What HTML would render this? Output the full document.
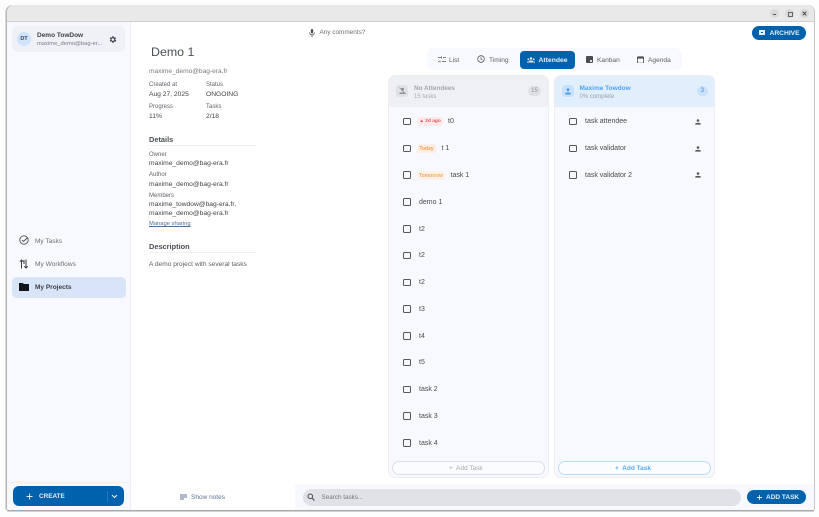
<!DOCTYPE html>
<html><head><meta charset="utf-8"><style>
html,body{margin:0;padding:0;width:819px;height:517px;overflow:hidden;background:#fdfdfd;font-family:"Liberation Sans",sans-serif;color:#3c4043}
body{filter:blur(.3px)}
div,span,svg{position:absolute;white-space:nowrap}
.t,.tk,.tab{transform:translateY(1px)}
.t{line-height:10px;height:10px}
.s{font-size:6px;color:#60646a}
.m{font-size:6.700px;color:#3f4347}
.h{font-size:7.400px;font-weight:bold;color:#4a4e53}
.cb{width:7.500px;height:7.500px;box-sizing:border-box;border:1.100px solid #54585d;border-radius:1.500px}
.tk{font-size:7px;color:#474b50;line-height:10px}
.b{height:9px;border-radius:3px;font-size:5px;line-height:10px;text-align:center;font-weight:bold}
.tab{font-size:6.600px;color:#5a5e63;line-height:10px}
</style></head><body>
<div style="left:7px;top:5px;width:807px;height:505px;background:#fff;border-radius:7px 7px 1px 1px;box-shadow:-1.500px 0 0 #b5b5b5,1px 0 0 #c5c5c5,0 1.500px 0 #a8a8a8;overflow:hidden">
<div style="left:0;top:0;width:807px;height:16px;background:#e9e9e9;border-bottom:1px solid #cfcfcf"></div>
<div style="left:0;top:17px;width:123px;height:488px;background:#f7f9ff;border-right:1px solid #eceef3"></div>
<div style="left:0;top:477px;width:123px;height:1px;background:#eef0f4"></div>
</div>
<!-- window buttons -->
<div style="left:770px;top:9px;width:9px;height:9px;border-radius:50%;background:#d9d9d9"></div>
<div style="left:773px;top:14px;width:3px;height:1px;background:#555"></div>
<div style="left:785px;top:9px;width:9px;height:9px;border-radius:50%;background:#d9d9d9"></div>
<div style="left:787.500px;top:11.500px;width:3px;height:3px;border:1px solid #666"></div>
<div style="left:800px;top:9px;width:9px;height:9px;border-radius:50%;background:#d9d9d9"></div>
<svg style="left:802px;top:11px" width="5" height="5" viewBox="0 0 5 5"><path d="M.7.7l3.600 3.600M4.300.7L.7 4.300" stroke="#444" stroke-width="1"/></svg>

<!-- profile -->
<div style="left:12px;top:26px;width:113px;height:26px;background:#eff1f7;border-radius:6px"></div>
<div style="left:17px;top:32px;width:14px;height:14px;border-radius:50%;background:#cfe3fb;color:#33475f;font-size:5.500px;font-weight:bold;line-height:14px;text-align:center">DT</div>
<div class="t" style="left:37px;top:29.500px;font-size:6.500px;font-weight:bold;color:#3d4145">Demo TowDow</div>
<div class="t" style="left:37px;top:38px;font-size:5.800px;color:#777b80">maxime_demo@bag-er...</div>
<svg style="left:108px;top:34.500px" width="9" height="9" viewBox="0 0 24 24"><path fill="#40444a" d="M19.400 13a7.500 7.500 0 0 0 0-2l2.100-1.600-2-3.500-2.500 1a7.500 7.500 0 0 0-1.700-1L15.400 3.300h-4l-.4 2.600a7.500 7.500 0 0 0-1.700 1l-2.500-1-2 3.500L6.900 11a7.500 7.500 0 0 0 0 2l-2.100 1.600 2 3.500 2.500-1a7.500 7.500 0 0 0 1.700 1l.4 2.600h4l.4-2.600a7.500 7.500 0 0 0 1.700-1l2.500 1 2-3.500zM13 15.500a3.500 3.500 0 1 1 0-7 3.500 3.500 0 0 1 0 7z"/></svg>

<!-- nav -->
<svg style="left:19px;top:235px" width="10" height="10" viewBox="0 0 10 10"><circle cx="5" cy="5" r="4.200" fill="none" stroke="#4a4e53" stroke-width=".9"/><path d="M3 5l1.500 1.500L8.500 2.500" fill="none" stroke="#4a4e53" stroke-width=".9"/></svg>
<div class="t" style="left:35px;top:235.500px;font-size:6.500px;color:#6b6f74">My Tasks</div>
<svg style="left:19px;top:259px" width="10" height="10" viewBox="0 0 10 10"><path d="M2.500 9.500V1M.8 2.700L2.500 1l1.700 1.700M7 .5V9M5.300 7.300L7 9l1.700-1.700M5 1v4" fill="none" stroke="#3c4043" stroke-width="1"/></svg>
<div class="t" style="left:35px;top:259px;font-size:6.600px;color:#6b6f74">My Workflows</div>
<div style="left:12px;top:276.500px;width:113.500px;height:21.500px;background:#d8e5f8;border-radius:5px"></div>
<svg style="left:19px;top:282px" width="10" height="9" viewBox="0 0 10 9"><path d="M0 1h3.800l1 1H10v7H0z" fill="#12161c"/></svg>
<div class="t" style="left:35px;top:282px;font-size:6.500px;font-weight:bold;color:#3a3e44">My Projects</div>

<!-- create -->
<div style="left:13px;top:486px;width:110.500px;height:20px;background:#0061ad;border-radius:6px"></div>
<svg style="left:26px;top:492.500px" width="7" height="7" viewBox="0 0 7 7"><path d="M3.500.5v6M.5 3.500h6" stroke="#dbe8f5" stroke-width="1"/></svg>
<div class="t" style="left:39px;top:490.500px;font-size:6.400px;font-weight:bold;color:#e5eef7">CREATE</div>
<div style="left:107px;top:491px;width:1px;height:11px;background:#2a78b8"></div>
<svg style="left:111px;top:494px" width="7" height="5" viewBox="0 0 7 5"><path d="M1 1l2.500 2.500L6 1" fill="none" stroke="#e5eef7" stroke-width="1.100"/></svg>

<!-- details -->
<div class="t" style="left:151px;top:46px;font-size:12.400px;color:#4b4f54">Demo 1</div>
<div class="t" style="left:149px;top:66px;font-size:6.600px;color:#777b80">maxime_demo@bag-era.fr</div>
<div class="t s" style="left:149px;top:78.500px">Created at</div>
<div class="t s" style="left:206px;top:78.500px">Status</div>
<div class="t m" style="left:149px;top:88.500px">Aug 27, 2025</div>
<div class="t m" style="left:206px;top:88.500px">ONGOING</div>
<div class="t s" style="left:149px;top:101px">Progress</div>
<div class="t s" style="left:206px;top:101px">Tasks</div>
<div class="t m" style="left:149px;top:111px">11%</div>
<div class="t m" style="left:206px;top:111px">2/18</div>
<div class="t h" style="left:149px;top:134px">Details</div>
<div style="left:149px;top:145px;width:107px;height:1px;background:#eef0f3"></div>
<div class="t s" style="left:149px;top:149px">Owner</div>
<div class="t m" style="left:149px;top:157.500px">maxime_demo@bag-era.fr</div>
<div class="t s" style="left:149px;top:169px">Author</div>
<div class="t m" style="left:149px;top:179px">maxime_demo@bag-era.fr</div>
<div class="t s" style="left:149px;top:189.500px">Members</div>
<div class="t m" style="left:149px;top:199px">maxime_towdow@bag-era.fr,</div>
<div class="t m" style="left:149px;top:208px">maxime_demo@bag-era.fr</div>
<div class="t" style="left:149px;top:218px;font-size:5.800px;color:#4f6f90;text-decoration:underline">Manage sharing</div>
<div class="t h" style="left:149px;top:240.500px">Description</div>
<div style="left:149px;top:251.500px;width:107px;height:1px;background:#eef0f3"></div>
<div class="t" style="left:149px;top:258.500px;font-size:6.600px;color:#5c6065">A demo project with several tasks</div>
<svg style="left:180px;top:494px" width="7" height="6" viewBox="0 0 7 6"><path d="M0 1h7M0 3h7M0 5h4" stroke="#5f7590" stroke-width=".9"/></svg>
<div class="t" style="left:191px;top:492px;font-size:6.500px;color:#5f7590">Show notes</div>

<!-- comments -->
<svg style="left:309px;top:28.500px" width="6" height="8" viewBox="0 0 6 8"><rect x="1.800" y="0" width="2.400" height="4.500" rx="1.200" fill="#4a4e53"/><path d="M.6 3.500a2.400 2.400 0 0 0 4.800 0M3 6v2" fill="none" stroke="#4a4e53" stroke-width=".8"/></svg>
<div class="t" style="left:319.500px;top:27px;font-size:6.400px;color:#6b6f74">Any comments?</div>

<!-- archive -->
<div style="left:751.500px;top:25.500px;width:54.300px;height:14.300px;background:#0061ad;border-radius:7px"></div>
<div style="left:759.300px;top:30px;width:5.800px;height:5.200px;background:#e5eef7"></div>
<div style="left:761px;top:32px;width:2.200px;height:1.200px;background:#0061ad"></div>
<div class="t" style="left:769.500px;top:27.500px;font-size:6.700px;font-weight:bold;color:#e5eef7">ARCHIVE</div>

<!-- tabs -->
<div style="left:427px;top:48px;width:255px;height:22px;background:#f7f9fe;border-radius:7px"></div>
<div style="left:520px;top:50.500px;width:55px;height:18px;background:#0061ad;border-radius:4px"></div>
<svg style="left:438px;top:56px" width="8" height="7" viewBox="0 0 8 7"><path d="M0 1.500h3M5 1.500h3M0 5.500h1M4 5.500h4M3.500 .5v2M2 4.500v2" stroke="#55595e" stroke-width=".8"/></svg>
<div class="tab" style="left:449px;top:54.500px">List</div>
<svg style="left:477px;top:55px" width="8" height="8" viewBox="0 0 8 8"><circle cx="4" cy="4" r="3.300" fill="none" stroke="#55595e" stroke-width=".8"/><path d="M4 2v2.200l1.500.8" fill="none" stroke="#55595e" stroke-width=".7"/></svg>
<div class="tab" style="left:489px;top:54.500px">Timing</div>
<svg style="left:527px;top:56.500px" width="8" height="6" viewBox="0 0 8 6"><circle cx="4" cy="1.500" r="1.200" fill="#e5eef7"/><circle cx="1.300" cy="2.300" r=".9" fill="#e5eef7"/><circle cx="6.700" cy="2.300" r=".9" fill="#e5eef7"/><path d="M0 5.500V4.500h8v1z" fill="#e5eef7"/><path d="M2.200 5V3.500h3.600V5z" fill="#e5eef7"/></svg>
<div class="t" style="left:538.500px;top:54.500px;font-size:6.800px;font-weight:bold;color:#e8f0f8">Attendee</div>
<div style="left:586px;top:56px;width:7px;height:6.500px;background:#4a4e53;border-radius:1px"></div>
<div style="left:589.500px;top:59.500px;width:2.500px;height:2px;background:#ddd"></div>
<div class="tab" style="left:597px;top:54.500px">Kanban</div>
<svg style="left:637px;top:55.500px" width="7" height="7.500" viewBox="0 0 7 7.500"><rect x=".4" y=".8" width="6.200" height="6.300" rx=".8" fill="none" stroke="#4a4e53" stroke-width=".8"/><path d="M.4 1h6.200v1.600H.4z" fill="#4a4e53"/></svg>
<div class="tab" style="left:648px;top:54.500px">Agenda</div>

<!-- column 1 -->
<div style="left:388.300px;top:75px;width:160.500px;height:403.300px;box-sizing:border-box;background:#f7f9fe;border:.6px solid #eceef4;border-radius:7px;overflow:hidden">
<div style="left:0;top:0;width:160px;height:30.500px;background:#eef0f3"></div></div>
<div style="left:396px;top:85px;width:12px;height:12px;background:#dfe1e5;border-radius:3px"></div>
<svg style="left:398.500px;top:87px" width="7" height="8" viewBox="0 0 7 8"><circle cx="3.500" cy="2.300" r="1.500" fill="#8b8f94"/><path d="M.5 7V5.500h6V7z" fill="#8b8f94"/><path d="M.5.5l6 6.500" stroke="#8b8f94" stroke-width=".6"/></svg>
<div class="t" style="left:414px;top:82.500px;font-size:6.400px;font-weight:bold;color:#a3a6aa">No Attendees</div>
<div class="t" style="left:414px;top:90.500px;font-size:6px;color:#a8abaf">15 tasks</div>
<div style="left:528px;top:85.800px;width:13px;height:10.500px;border-radius:6px;background:#dfe1e4;font-size:6px;line-height:11px;text-align:center;color:#8f9297">15</div>

<div class="cb" style="left:403px;top:117.500px"></div>
<div class="b" style="left:417px;top:117px;width:26px;background:#fdeaea;color:#e8505b;font-size:4.800px">▲ 2d ago</div>
<div class="tk" style="left:448px;top:116px">t0</div>
<div class="cb" style="left:403px;top:144.500px"></div>
<div class="b" style="left:417px;top:144px;width:19px;background:#fdeee6;color:#f5a04e">Today</div>
<div class="tk" style="left:441.500px;top:143px">t 1</div>
<div class="cb" style="left:403px;top:171px"></div>
<div class="b" style="left:417px;top:171px;width:28px;background:#fdf1ea;color:#f5a85e">Tomorrow</div>
<div class="tk" style="left:450.500px;top:170px">task 1</div>
<div class="cb" style="left:403px;top:198px"></div><div class="tk" style="left:419px;top:196.500px">demo 1</div>
<div class="cb" style="left:403px;top:225px"></div><div class="tk" style="left:419px;top:223.500px">t2</div>
<div class="cb" style="left:403px;top:251.500px"></div><div class="tk" style="left:419px;top:250px">t2</div>
<div class="cb" style="left:403px;top:278.500px"></div><div class="tk" style="left:419px;top:277px">t2</div>
<div class="cb" style="left:403px;top:305px"></div><div class="tk" style="left:419px;top:303.500px">t3</div>
<div class="cb" style="left:403px;top:332px"></div><div class="tk" style="left:419px;top:330.500px">t4</div>
<div class="cb" style="left:403px;top:358.500px"></div><div class="tk" style="left:419px;top:357px">t5</div>
<div class="cb" style="left:403px;top:385.500px"></div><div class="tk" style="left:419px;top:384px">task 2</div>
<div class="cb" style="left:403px;top:412px"></div><div class="tk" style="left:419px;top:410.500px">task 3</div>
<div class="cb" style="left:403px;top:439px"></div><div class="tk" style="left:419px;top:437.500px">task 4</div>
<div style="left:392.300px;top:461px;width:152.400px;height:13.700px;box-sizing:border-box;border:.7px solid #dcdfe5;border-radius:7px;background:#fbfcff"></div>
<div class="t" style="left:449px;top:463px;font-size:6.500px;color:#a4a7ab">+&nbsp; Add Task</div>

<!-- column 2 -->
<div style="left:554.300px;top:75px;width:160.500px;height:403.300px;box-sizing:border-box;background:#f7f9fe;border:.6px solid #eceef4;border-radius:7px;overflow:hidden">
<div style="left:0;top:0;width:160px;height:30.500px;background:#e1effd"></div></div>
<div style="left:562px;top:85px;width:12px;height:12px;background:#c9e1fb;border-radius:3px"></div>
<svg style="left:565px;top:87.500px" width="6" height="7" viewBox="0 0 6 7"><circle cx="3" cy="1.800" r="1.400" fill="#4b9be8"/><path d="M.3 6.500V5.200C.3 4.300 5.700 4.300 5.700 5.200v1.300z" fill="#4b9be8"/></svg>
<div class="t" style="left:579.500px;top:82.500px;font-size:6.500px;font-weight:bold;color:#4da3f0">Maxime Towdow</div>
<div class="t" style="left:579.500px;top:90.500px;font-size:6px;color:#9a9fa6">0% complete</div>
<div style="left:697px;top:85.800px;width:10.500px;height:10.500px;border-radius:50%;background:#c9e1fb;font-size:6px;line-height:11px;text-align:center;color:#3f8ad6">3</div>

<div class="cb" style="left:569px;top:117.500px"></div><div class="tk" style="left:585px;top:116px">task attendee</div>
<div class="cb" style="left:569px;top:144.500px"></div><div class="tk" style="left:585px;top:143px">task validator</div>
<div class="cb" style="left:569px;top:171px"></div><div class="tk" style="left:585px;top:170px">task validator 2</div>
<svg style="left:695px;top:118.500px" width="6" height="6" viewBox="0 0 6 6"><circle cx="3" cy="1.500" r="1.300" fill="#54585d"/><path d="M.3 5.600V4.600C.3 3.600 5.700 3.600 5.700 4.600v1z" fill="#54585d"/></svg>
<svg style="left:695px;top:145.500px" width="6" height="6" viewBox="0 0 6 6"><circle cx="3" cy="1.500" r="1.300" fill="#54585d"/><path d="M.3 5.600V4.600C.3 3.600 5.700 3.600 5.700 4.600v1z" fill="#54585d"/></svg>
<svg style="left:695px;top:172px" width="6" height="6" viewBox="0 0 6 6"><circle cx="3" cy="1.500" r="1.300" fill="#54585d"/><path d="M.3 5.600V4.600C.3 3.600 5.700 3.600 5.700 4.600v1z" fill="#54585d"/></svg>
<div style="left:558.300px;top:461px;width:152.400px;height:13.700px;box-sizing:border-box;border:.7px solid #bcdcfb;border-radius:7px;background:#fbfcff"></div>
<div class="t" style="left:615px;top:463px;font-size:6.500px;font-weight:bold;color:#5aaaf2">+&nbsp; Add Task</div>

<!-- bottom -->
<div style="left:295px;top:484px;width:519px;height:26px;background:#f7f9fe"></div>
<div style="left:302.500px;top:488.500px;width:438.500px;height:17px;background:#e0e2e6;border-radius:9px"></div>
<svg style="left:307px;top:493px" width="8" height="8" viewBox="0 0 8 8"><circle cx="3.300" cy="3.300" r="2.300" fill="none" stroke="#4a4e53" stroke-width="1"/><path d="M5 5l2.500 2.500" stroke="#4a4e53" stroke-width="1.100"/></svg>
<div class="t" style="left:321.500px;top:492px;font-size:6.300px;color:#74787d">Search tasks...</div>
<div style="left:747.300px;top:490px;width:58.500px;height:14.300px;background:#0061ad;border-radius:7px"></div>
<svg style="left:755.500px;top:493.500px" width="7" height="7" viewBox="0 0 7 7"><path d="M3.500 1v5M1 3.500h5" stroke="#e5eef7" stroke-width=".9"/></svg>
<div class="t" style="left:766px;top:492px;font-size:6.500px;font-weight:bold;color:#e5eef7">ADD TASK</div>
</body></html>
